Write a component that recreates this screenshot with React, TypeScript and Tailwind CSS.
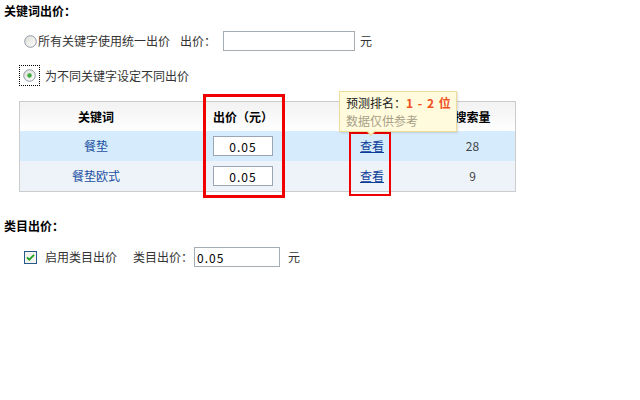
import React from "react";

const FONT = { fontFamily: '"Noto Sans CJK SC", "Liberation Sans", sans-serif' };

const Radio = ({ checked }: { checked?: boolean }) => (
  <svg width="13" height="13" viewBox="0 0 13 13" className="shrink-0">
    <defs>
      <linearGradient id={checked ? "rg1" : "rg0"} x1="0" y1="0" x2="1" y2="1">
        <stop offset="0" stopColor="#dcdcd6" />
        <stop offset="1" stopColor="#ffffff" />
      </linearGradient>
    </defs>
    <circle cx="6.5" cy="6.5" r="5.8" fill={`url(#${checked ? "rg1" : "rg0"})`} stroke="#8f9aa6" strokeWidth="1" />
    {checked && <circle cx="6.5" cy="6.5" r="2.2" fill="#3ca93c" />}
  </svg>
);

const Checkbox = () => (
  <svg width="13" height="13" viewBox="0 0 13 13" className="shrink-0">
    <rect x="0.5" y="0.5" width="12" height="12" fill="#f2f2ee" stroke="#2a5a8c" />
    <path d="M3 6.3 L5.3 8.7 L10 3.8" fill="none" stroke="#21a121" strokeWidth="1.8" />
  </svg>
);

const rows = [
  { kw: "餐垫", price: "0.05", count: "28", bg: "bg-[#d6ebfb]" },
  { kw: "餐垫欧式", price: "0.05", count: "9", bg: "bg-[#edf3f9]" },
];

export default function App() {
  return (
    <div className="relative w-[640px] h-[400px] bg-white pl-[4px] text-[12px] text-[#333]" style={FONT}>
      <div className="h-[21px] pt-[3px] font-bold leading-[16px] text-black">关键词出价：</div>

      <div className="mt-[10px] flex h-[20px] items-center pl-[20px]">
        <Radio />
        <span className="ml-[1px] w-[142px]">所有关键字使用统一出价</span>
        <span className="w-[43px]">出价：</span>
        <input className="h-[20px] w-[132px] border border-[#a5acb2] bg-white outline-none" />
        <span className="ml-[5px]">元</span>
      </div>

      <div className="mt-[14px] flex h-[21px] items-center pl-[15px]">
        <div className="flex h-[21px] w-[21px] items-center justify-center border border-dotted border-black">
          <Radio checked />
        </div>
        <span className="ml-[5px]">为不同关键字设定不同出价</span>
      </div>

      <div className="ml-[15px] mt-[15px] w-[497px] border border-[#cccccc]">
        <div className="grid h-[29px] grid-cols-[152px_142px_116px_1fr] items-center bg-gradient-to-b from-[#f2f2f2] to-white font-bold text-black">
          <div className="text-center">关键词</div>
          <div className="text-center">出价（元）</div>
          <div></div>
          <div className="text-center">搜索量</div>
        </div>
        {rows.map((r) => (
          <div key={r.kw} className={`grid h-[30px] grid-cols-[152px_142px_116px_1fr] items-center ${r.bg}`}>
            <div className="text-center text-[#1a50a2]">{r.kw}</div>
            <div className="flex justify-center">
              <input
                readOnly
                value={r.price}
                className="h-[20px] w-[60px] border border-[#9aa6b3] bg-white text-center text-[12px] tracking-[1px] text-black outline-none"
              />
            </div>
            <div className="text-center">
              <span className="text-[#0c3d99] underline">查看</span>
            </div>
            <div className="text-center text-[#444]">{r.count}</div>
          </div>
        ))}
      </div>

      <div className="mt-[26px] h-[16px] font-bold leading-[16px] text-black">类目出价：</div>

      <div className="mt-[13px] flex h-[20px] items-center pl-[20px]">
        <Checkbox />
        <span className="ml-[8px] w-[88px]">启用类目出价</span>
        <span className="w-[61px]">类目出价：</span>
        <input
          readOnly
          value="0.05"
          className="h-[20px] w-[86px] border border-[#a5acb2] bg-white pl-[2px] text-[12px] tracking-[1px] text-black outline-none"
        />
        <span className="ml-[8px]">元</span>
      </div>

      {/* annotation boxes */}
      <div className="absolute left-[203px] top-[94px] h-[104px] w-[82px] border-[3px] border-[#f00000]" />
      <div className="absolute left-[349px] top-[132px] h-[64px] w-[42px] border-2 border-[#f00000]" />

      {/* tooltip */}
      <div className="absolute left-[339px] top-[91px] h-[41px] w-[118px] border border-[#eedc98] bg-[#fffbdc] pl-[6px] pt-[2px] shadow-[1px_1px_2px_rgba(0,0,0,0.12)]">
        <div className="leading-[18px] text-[#222]">
          预测排名：<span className="font-bold tracking-[1px] text-[#f0501e]">1 - 2 位</span>
        </div>
        <div className="leading-[18px] text-[#a8a088]">数据仅供参考</div>
        <div className="absolute left-[26px] top-[39px] h-0 w-0 border-x-[5px] border-t-[5px] border-x-transparent border-t-[#eedc98]" />
        <div className="absolute left-[27px] top-[38px] h-0 w-0 border-x-[4px] border-t-[4px] border-x-transparent border-t-[#fffbdc]" />
      </div>
    </div>
  );
}
